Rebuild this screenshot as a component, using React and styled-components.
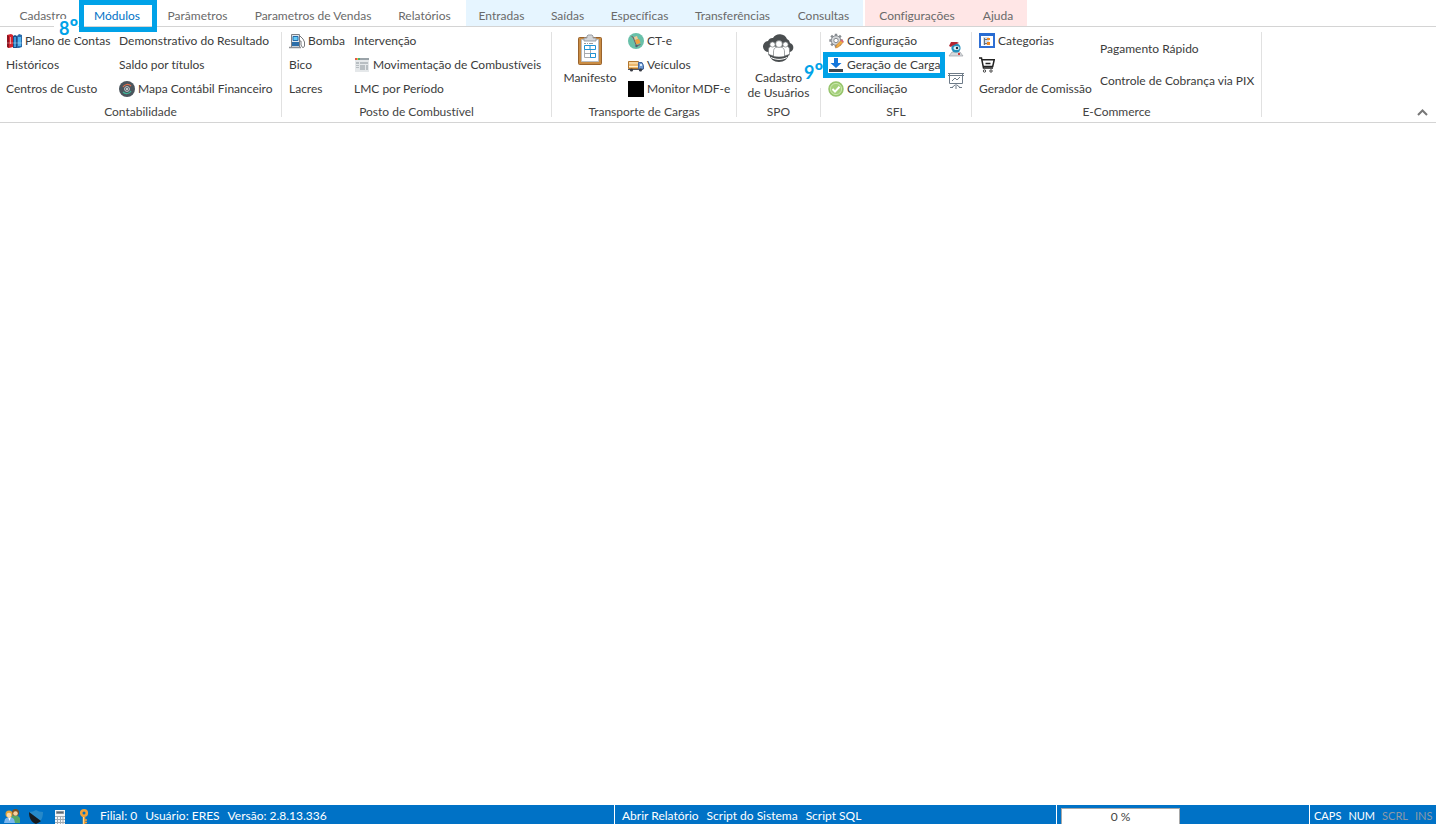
import React from "react";
import styled, { createGlobalStyle } from "styled-components";

const GlobalStyle = createGlobalStyle`
  * {
    box-sizing: border-box;
  }
  body {
    margin: 0;
    background: #fff;
    font-family: Lato, "Noto Sans", sans-serif;
    font-size: 12px;
    font-variant-ligatures: none;
    color: #3b3b3b;
  }
  button {
    margin: 0;
    padding: 0;
    border: 0;
    background: none;
    font: inherit;
    font-variant-ligatures: none;
    color: inherit;
    white-space: nowrap;
    cursor: pointer;
  }
`;

const Page = styled.div`
  display: flex;
  flex-direction: column;
  min-height: 100vh;
`;

const TabBar = styled.nav`
  display: flex;
  gap: 2px;
  height: 27px;
  padding-left: 6px;
  border-bottom: 1px solid #d4d4d4;
`;

const TabGroup = styled.div`
  display: flex;
  background: ${(p) => p.$tint || "transparent"};
`;

const Tab = styled.button`
  position: relative;
  display: flex;
  justify-content: center;
  width: ${(p) => p.$width}px;
  && {
    padding-top: 6px;
    color: ${(p) => (p.$active ? "#0072c6" : "#6a6a6a")};
    line-height: 20px;
  }
`;

const Ribbon = styled.div`
  display: flex;
  min-height: 96px;
  border-bottom: 1px solid #d4d4d4;
`;

const Group = styled.section`
  display: flex;
  flex-direction: column;
  padding-top: 2px;
`;

const GroupBody = styled.div`
  display: flex;
  height: 72px;
  padding-left: ${(p) => p.$left || 0}px;
`;

const Caption = styled.div`
  line-height: 21px;
  text-align: center;
  color: #444;
`;

const Divider = styled.div`
  width: 1px;
  margin: 5px 0;
  background: #e1e1e1;
`;

const Column = styled.div`
  display: flex;
  flex-direction: column;
  align-items: flex-start;
  justify-content: center;
  width: ${(p) => p.$width}px;
`;

const Item = styled.button`
  position: relative;
  display: flex;
  align-items: center;
  gap: 3px;
  height: ${(p) => (p.$tall ? 32 : 24)}px;
  && {
    line-height: 14px;
  }
  svg {
    flex: none;
  }
`;

const BigItem = styled.button`
  display: flex;
  flex-direction: column;
  align-items: center;
  gap: 4px;
  width: ${(p) => p.$width}px;
  && {
    padding-top: 5px;
    line-height: 15px;
  }
`;

const Collapse = styled.button`
  display: flex;
  align-self: flex-end;
  && {
    margin: 0 8px 5px auto;
  }
`;

const Marker = styled.span`
  position: absolute;
  z-index: 2;
  inset: ${(p) => p.$inset};
  border: 5px solid #00a2e8;
  pointer-events: none;
`;

const StepNumber = styled.span`
  position: absolute;
  z-index: 1;
  left: ${(p) => p.$left}px;
  top: ${(p) => p.$top}px;
  height: ${(p) => p.$height}px;
  padding-left: ${(p) => p.$pad}px;
  background: #fff;
  color: #00a2e8;
  font: 700 18px/18px Lato, sans-serif;
  text-align: left;
  pointer-events: none;
`;

const Ordinal = styled.span`
  font-size: 22px;
  line-height: 1px;
`;

const Workspace = styled.main`
  flex: 1;
`;

const StatusBar = styled.footer`
  display: grid;
  grid-template-columns: 614fr 442fr 253fr 127px;
  height: 19px;
  background: #0072c6;
  color: #fff;
  line-height: 16px;
`;

const StatusPart = styled.div`
  display: flex;
  align-items: flex-start;
  gap: ${(p) => p.$gap || 8}px;
  padding: 3px 0 0 ${(p) => p.$left}px;
  border-left: ${(p) => (p.$line ? "1px solid #fff" : "0")};
  white-space: nowrap;
`;

const StatusIcons = styled.div`
  display: flex;
  gap: 8px;
`;

const Progress = styled.div`
  width: 119px;
  height: 16px;
  border: 1px solid #a8a8a8;
  border-bottom: 0;
  background: #fff;
  color: #444;
  line-height: 15px;
  text-align: center;
`;

const KeyState = styled.span`
  font-size: 11px;
  color: ${(p) => (p.$off ? "#8d9aa8" : "#fff")};
`;

const Svg = ({ size = 16, children }) => (
  <svg width={size} height={size} viewBox={`0 0 ${size} ${size}`} fill="none" aria-hidden="true">
    {children}
  </svg>
);

const BooksIcon = () => (
  <Svg>
    <path d="M1 2l4-1 2 1v12l-4 1-2-1z" fill="#d3242e" />
    <path d="M1 2l2 1v12l-2-1z" fill="#8e1420" />
    <path d="M4.500 4v7" stroke="#f49a9a" />
    <path d="M7 3l2-1 2 1v12H7z" fill="#1f4f86" />
    <path d="M8 4h2v10H8z" fill="#3f9bdc" />
    <path d="M11 3l2-2 3 1v12l-3 1h-2z" fill="#2b6cab" />
    <path d="M12 4h3v9h-3z" fill="#54b5ee" />
    <path d="M1 10h15" stroke="#fff" strokeOpacity=".35" />
  </Svg>
);

const DialIcon = () => (
  <Svg>
    <circle cx="8" cy="8" r="8" fill="#4b555d" />
    <path d="M4 6a5 5 0 0 1 8-1" stroke="#e2704d" strokeWidth="1.200" />
    <path d="M12 10a5 5 0 0 1-8 1" stroke="#3fb598" strokeWidth="1.200" />
    <circle cx="8" cy="8" r="2.400" stroke="#c9cfd3" />
    <circle cx="8" cy="8" r="1" fill="#e8ecee" />
  </Svg>
);

const PumpIcon = () => (
  <Svg>
    <path d="M2.500 1.500h8v13h-8z" fill="#dfe7ee" stroke="#7c7f84" />
    <path d="M4 3.500h5v4H4z" fill="#63cbf8" stroke="#256aa8" />
    <path d="M3 9h7v4H3z" fill="#2c6ea9" />
    <path d="M0 14.500h12" stroke="#8d8f93" strokeWidth="1.500" />
    <path d="M11 3l3 3 1.500 3v4l-1 1.500h-1L12 12V8h-1" stroke="#77797d" />
  </Svg>
);

const WindowIcon = () => (
  <Svg>
    <path d="M1 1h14v14H1z" fill="#e5e8ea" />
    <path d="M1 1h14v2H1z" fill="#9aa3a8" />
    <path d="M1 1h2v2H1z" fill="#e2574c" />
    <path d="M3 1h1v2H3z" fill="#efb73e" />
    <path d="M4 1h2v2H4z" fill="#4aae73" />
    <path d="M2 5h3v2H2zM2 8h3v1H2zM2 10h3v1H2zM6 5h8v2H6zM6 8h5v5H6zM12 8h2v5h-2z" fill="#b8bec2" />
  </Svg>
);

const ClipboardIcon = () => (
  <Svg size={32}>
    <rect x="4.500" y="3.500" width="23" height="27" rx="1" fill="#c98c43" stroke="#99632d" />
    <path d="M7.500 5.500h17v22h-17z" fill="#fff" stroke="#b9bdc2" />
    <path d="M10 7V4h3V2l1-1h4l1 1v2h3v3z" fill="#d3d5d8" stroke="#9b9fa4" />
    <path d="M10 9.500h2M13 9.500h1M15 9.500h4" stroke="#999" />
    <path d="M10.500 15.500v8h6M10.500 19.500h6M16.500 16v8M22 19.500h-5" stroke="#a7aaae" />
    <path d="M10.500 11.500h11v4h-11zM16 11.500v4M16.500 19.500h5v4h-5z" stroke="#1e93d4" />
  </Svg>
);

const TrolleyIcon = () => (
  <Svg>
    <circle cx="8" cy="8" r="8" fill="#68c0a9" />
    <path d="M3.500 3.500L5 4l3.500 9 4-1.500" stroke="#7b5a60" />
    <path d="M6 4l3-1 1 3-3 1z" fill="#f7c894" />
    <path d="M7 7l4-1 1.500 4-4 1.500z" fill="#f2a03d" />
    <circle cx="8.500" cy="13" r="1.200" fill="#4f5d73" />
  </Svg>
);

const TruckIcon = () => (
  <Svg>
    <path d="M.5 4.500h10v7H.5z" fill="#edb86d" stroke="#b1762f" />
    <path d="M1 6h9M1 9.500h9" stroke="#fff0ce" />
    <path d="M0 12.500h15" stroke="#54575f" />
    <path d="M10.500 5.500H14l1.500 3v3.500h-5z" fill="#6d99d3" stroke="#45669b" />
    <path d="M12 7h2v2h-2z" fill="#dff0ff" />
    <circle cx="3.500" cy="13" r="1.600" fill="#3a3d46" />
    <circle cx="12.500" cy="13" r="1.600" fill="#3a3d46" />
  </Svg>
);

const BlackIcon = () => (
  <Svg>
    <path d="M0 0h16v16H0z" fill="#000" />
  </Svg>
);

const CloudUsersIcon = () => (
  <Svg size={32}>
    <path d="M6 18a5.500 5.500 0 0 1-1-11 5 5 0 0 1 5-3 8 8 0 0 1 14 1 5.500 5.500 0 0 1 3 4 4.700 4.700 0 0 1 0 9z" fill="#4a4e50" />
    <g fill="#fff" stroke="#777b7d" strokeWidth=".7">
      <path d="M5.500 21v-5c0-3 1.500-4 4.500-4s4.500 1 4.500 4v6z" />
      <path d="M17.500 22v-6c0-3 1.500-4 4.500-4s4.500 1 4.500 4v5z" />
      <circle cx="9.500" cy="10.500" r="2.600" />
      <circle cx="22.500" cy="10.500" r="2.600" />
      <path d="M10.500 23v-5c0-4 2-5 5.500-5s5.500 1 5.500 5v5z" />
      <circle cx="16" cy="10" r="3.400" />
    </g>
    <path d="M6 20c5 4 15 4 20 0-1 5-5 8-10 8S7 25 6 20z" fill="#4a4e50" />
    <path d="M8 23.500c5 2.500 11 2.500 16 0" stroke="#fff" />
  </Svg>
);

const GearPencilIcon = () => (
  <Svg>
    <path d="M8 .8v13.400M1.300 7.500h13.400M3.200 2.700l9.600 9.600M12.800 2.700l-9.600 9.600" stroke="#888c91" strokeWidth="2.400" />
    <circle cx="8" cy="7.500" r="4.800" fill="#d3d6d9" stroke="#888c91" />
    <circle cx="8" cy="7.500" r="2.200" fill="#fff" stroke="#888c91" />
    <path d="M7.500 15l1-3 5-5 2 2-5 5z" fill="#f2ae43" stroke="#bd752e" strokeWidth=".6" />
    <path d="M12.500 7.500l1.200-1.200 2 2-1.200 1.200z" fill="#d8637b" />
  </Svg>
);

const DownloadIcon = () => (
  <Svg>
    <path d="M6 1h4v5h3.500L8 11 2.500 6H6z" fill="#1477dc" />
    <path d="M1 12h14v3H1z" fill="#3c4650" />
  </Svg>
);

const CheckIcon = () => (
  <Svg>
    <circle cx="8" cy="8" r="7" fill="#a4d07a" stroke="#96c46c" strokeWidth="1.500" />
    <circle cx="8" cy="8" r="5.600" stroke="#c9e7ac" />
    <path d="M4.500 8l2.500 2.600 4.500-4.800" stroke="#fff" strokeWidth="2" />
  </Svg>
);

const AgentIcon = () => (
  <Svg>
    <path d="M1 15l3-4h8l3 4z" fill="#d6d9dc" stroke="#9da2a8" strokeWidth=".7" />
    <path d="M10 12l2 2M12 12l-2 2" stroke="#d23e3e" />
    <circle cx="8" cy="7" r="4.600" fill="#2490bd" />
    <ellipse cx="8.500" cy="7" rx="3" ry="2" fill="#d9f2fa" />
    <circle cx="9" cy="7" r="1.200" fill="#26303b" />
    <path d="M1 5l2-4h6l2 1-4 1.500L4 5l-1 1z" fill="#b32632" />
  </Svg>
);

const BoardIcon = () => (
  <Svg>
    <path d="M0 .5h16M0 2.500h16M8 11v5M7 12l-3 2.500M9 12l3 2.500M2 14.500h3M11 14.500h3" stroke="#6e7b88" />
    <path d="M1.500 1v9.500h13V1" stroke="#6e7b88" />
    <path d="M4 8l3-3 2 2 3-3" stroke="#6e7b88" />
  </Svg>
);

const TreeIcon = () => (
  <Svg>
    <path d="M1 1h14v13H1z" fill="#fff" stroke="#2f6fd4" strokeWidth="2" />
    <path d="M0 0h16v3H0z" fill="#276bd2" />
    <path d="M4 4h6v8H4z" fill="#d3dde9" />
    <path d="M5.500 5v7M6 6.500h3M6 10.500h3" stroke="#6a707b" />
    <path d="M8 5h3v2H8zM8 9h3v3H8z" fill="#f08a24" />
  </Svg>
);

const CartIcon = () => (
  <Svg>
    <path d="M0 1h2.500l2 10h9.500" stroke="#222" strokeWidth="1.500" />
    <path d="M3 2.800h12.200l-1.500 6.700H4" stroke="#222" strokeWidth="1.500" />
    <path d="M6.500 6.500h5" stroke="#222" strokeWidth="1.500" />
    <circle cx="5.500" cy="14" r="1.200" stroke="#444" />
    <circle cx="12" cy="14" r="1.200" stroke="#444" />
  </Svg>
);

const UsersIcon = () => (
  <Svg>
    <path d="M7 9l2-2h4l3 3v5H8z" fill="#55a869" />
    <circle cx="11.500" cy="4.500" r="3.500" fill="#7b4f22" />
    <circle cx="11.500" cy="5.500" r="2.300" fill="#f7d2a0" />
    <path d="M0 15l1-4 3-2h3l3 2 1 4z" fill="#7ab6ee" />
    <path d="M4 9l1.500 4L7 9z" fill="#fff" />
    <circle cx="5" cy="6" r="3.500" fill="#e4a53c" />
    <circle cx="5" cy="7" r="2.300" fill="#fbdcae" />
  </Svg>
);

const ShieldIcon = () => (
  <Svg>
    <path d="M1 4c3 0 5-1 7-2 2 1 4 2 7 2 0 6-2 10-7 12C3 14 1 10 1 4z" fill="#2689c9" />
    <path d="M1 4l12 9c-1 1-3 2-5 3C3 14 1 10 1 4z" fill="#151a20" />
  </Svg>
);

const CalculatorIcon = () => (
  <Svg>
    <path d="M3 2h10v14H3z" fill="#f4f6f8" />
    <path d="M4.500 3.500h7v2h-7z" fill="#60676e" stroke="#8c959d" />
    <path d="M3 8.500h10M3 11.500h10M3 14.500h10M5.500 8v8M8.500 8v8M11 8v8" stroke="#a3abb2" />
  </Svg>
);

const KeyIcon = () => (
  <Svg>
    <circle cx="8" cy="5" r="2.800" stroke="#f3a13a" strokeWidth="2.600" />
    <path d="M8 9v7" stroke="#f3a13a" strokeWidth="2.600" />
    <path d="M9 12h2M9 14.500h2" stroke="#f3a13a" strokeWidth="1.500" />
    <path d="M7.500 9v7" stroke="#ffd68a" />
  </Svg>
);

const tabGroups = [
  {
    tabs: [
      ["Cadastro", 74],
      ["Módulos", 74],
      ["Parâmetros", 87],
      ["Parametros de Vendas", 144],
      ["Relatórios", 79],
    ],
  },
  {
    tint: "#e6f5ff",
    tabs: [
      ["Entradas", 71],
      ["Saídas", 61],
      ["Específicas", 83],
      ["Transferências", 103],
      ["Consultas", 79],
    ],
  },
  {
    tint: "#ffe6e6",
    tabs: [
      ["Configurações", 104],
      ["Ajuda", 58],
    ],
  },
];

const App = () => {
  return (
    <Page>
      <GlobalStyle />
      <TabBar>
        {tabGroups.map((group) => (
          <TabGroup key={group.tabs[0][0]} $tint={group.tint}>
            {group.tabs.map(([name, width]) => (
              <Tab key={name} $width={width} $active={name === "Módulos"}>
                {name}
                {name === "Módulos" && (
                  <>
                    <Marker $inset="0 -3px -6px -1px" />
                    <StepNumber $left={-26} $top={19} $height={19} $pad={5}>
                      8<Ordinal>º</Ordinal>
                    </StepNumber>
                  </>
                )}
              </Tab>
            ))}
          </TabGroup>
        ))}
      </TabBar>
      <Ribbon>
        <Group>
          <GroupBody $left={6}>
            <Column $width={113}>
              <Item><BooksIcon />Plano de Contas</Item>
              <Item>Históricos</Item>
              <Item>Centros de Custo</Item>
            </Column>
            <Column $width={162}>
              <Item>Demonstrativo do Resultado</Item>
              <Item>Saldo por títulos</Item>
              <Item><DialIcon />Mapa Contábil Financeiro</Item>
            </Column>
          </GroupBody>
          <Caption>Contabilidade</Caption>
        </Group>
        <Divider />
        <Group>
          <GroupBody $left={7}>
            <Column $width={65}>
              <Item><PumpIcon />Bomba</Item>
              <Item>Bico</Item>
              <Item>Lacres</Item>
            </Column>
            <Column $width={197}>
              <Item>Intervenção</Item>
              <Item><WindowIcon />Movimentação de Combustíveis</Item>
              <Item>LMC por Período</Item>
            </Column>
          </GroupBody>
          <Caption>Posto de Combustível</Caption>
        </Group>
        <Divider />
        <Group>
          <GroupBody>
            <BigItem $width={76}>
              <ClipboardIcon />
              Manifesto
            </BigItem>
            <Column $width={108}>
              <Item><TrolleyIcon />CT-e</Item>
              <Item><TruckIcon />Veículos</Item>
              <Item><BlackIcon />Monitor MDF-e</Item>
            </Column>
          </GroupBody>
          <Caption>Transporte de Cargas</Caption>
        </Group>
        <Divider />
        <Group>
          <GroupBody>
            <BigItem $width={83}>
              <CloudUsersIcon />
              <span>Cadastro<br />de Usuários</span>
            </BigItem>
          </GroupBody>
          <Caption>SPO</Caption>
        </Group>
        <Divider />
        <Group>
          <GroupBody $left={7}>
            <Column $width={120}>
              <Item><GearPencilIcon />Configuração</Item>
              <Item>
                <DownloadIcon />Geração de Carga
                <StepNumber $left={-25} $top={10} $height={25} $pad={1}>
                  9<Ordinal>º</Ordinal>
                </StepNumber>
                <Marker $inset="-1px -5px -1px -5px" />
              </Item>
              <Item><CheckIcon />Conciliação</Item>
            </Column>
            <Column $width={23}>
              <Item $tall aria-label="Atendimento"><AgentIcon /></Item>
              <Item $tall aria-label="Painel"><BoardIcon /></Item>
            </Column>
          </GroupBody>
          <Caption>SFL</Caption>
        </Group>
        <Divider />
        <Group>
          <GroupBody $left={7}>
            <Column $width={121}>
              <Item><TreeIcon />Categorias</Item>
              <Item aria-label="Carrinho"><CartIcon /></Item>
              <Item>Gerador de Comissão</Item>
            </Column>
            <Column $width={161}>
              <Item $tall>Pagamento Rápido</Item>
              <Item $tall>Controle de Cobrança via PIX</Item>
            </Column>
          </GroupBody>
          <Caption>E-Commerce</Caption>
        </Group>
        <Divider />
        <Collapse aria-label="Recolher">
          <svg width="11" height="9" viewBox="0 0 11 9" fill="none">
            <path d="M1 7l4.500-4.500L10 7" stroke="#777" strokeWidth="2" />
          </svg>
        </Collapse>
      </Ribbon>
      <Workspace />
      <StatusBar>
        <StatusPart $left={4}>
          <StatusIcons>
            <UsersIcon />
            <ShieldIcon />
            <CalculatorIcon />
            <KeyIcon />
          </StatusIcons>
          <span>Filial: 0</span>
          <span>Usuário: ERES</span>
          <span>Versão: 2.8.13.336</span>
        </StatusPart>
        <StatusPart $left={7} $line>
          <button>Abrir Relatório</button>
          <button>Script do Sistema</button>
          <button>Script SQL</button>
        </StatusPart>
        <StatusPart $left={4} $line>
          <Progress>0 %</Progress>
        </StatusPart>
        <StatusPart $left={4} $gap={7} $line>
          <KeyState>CAPS</KeyState>
          <KeyState>NUM</KeyState>
          <KeyState $off>SCRL</KeyState>
          <KeyState $off>INS</KeyState>
        </StatusPart>
      </StatusBar>
    </Page>
  );
};

export default App;
